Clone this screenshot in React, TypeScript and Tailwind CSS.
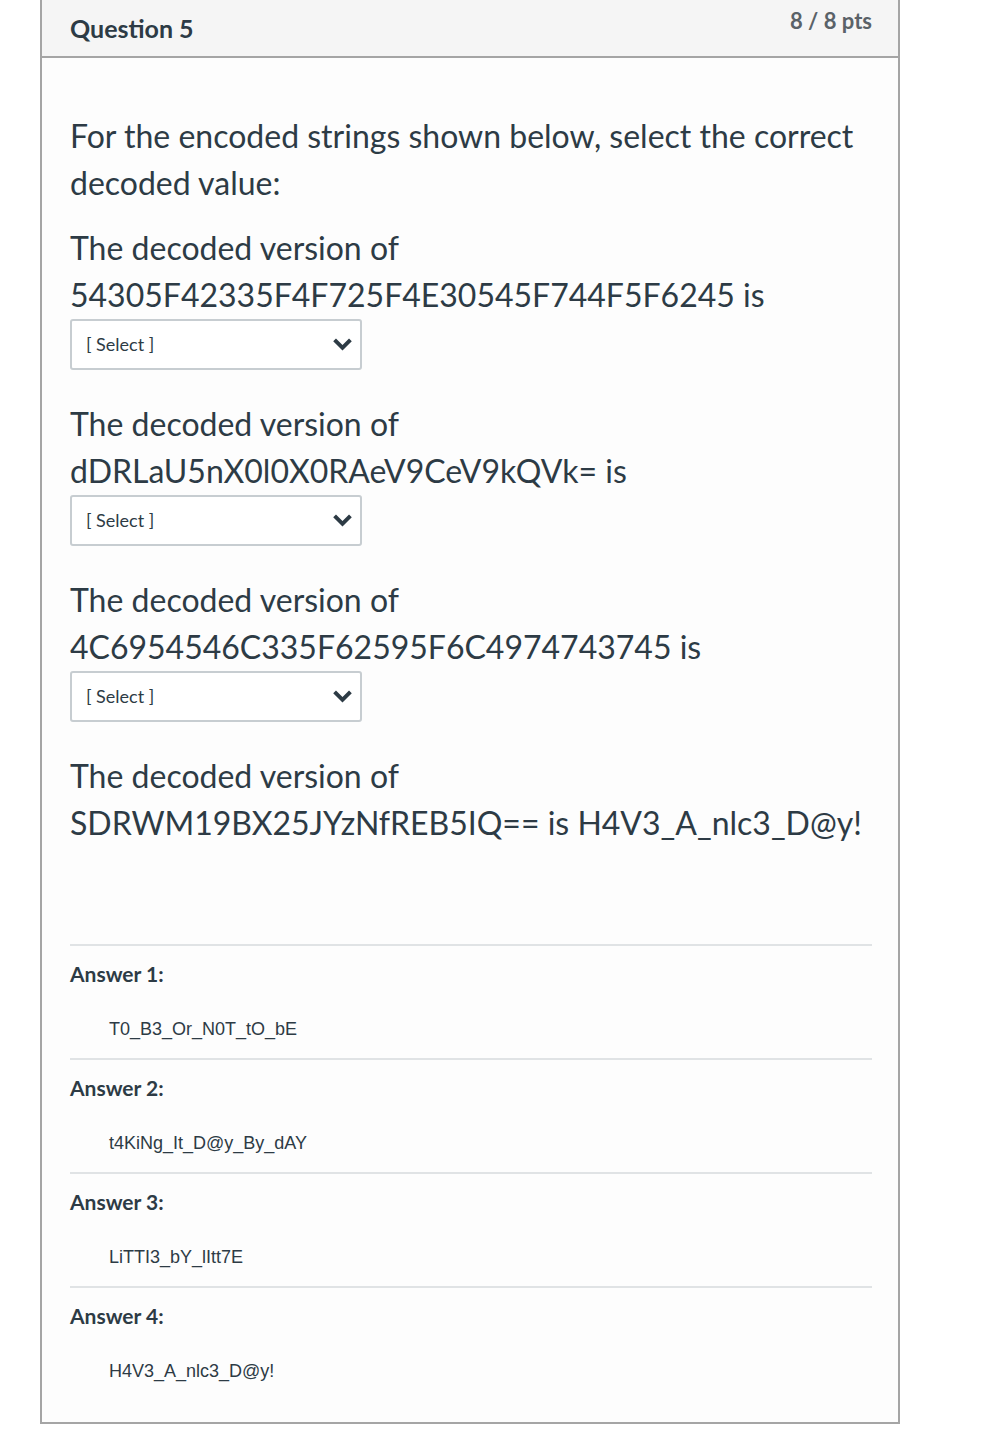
import React from "react";

const questions = [
  { code: "54305F42335F4F725F4E30545F744F5F6245", select: true },
  { code: "dDRLaU5nX0l0X0RAeV9CeV9kQVk=", select: true },
  { code: "4C6954546C335F62595F6C4974743745", select: true },
  { code: "SDRWM19BX25JYzNfREB5IQ==", answer: "H4V3_A_nlc3_D@y!" },
];

const answers = ["T0_B3_Or_N0T_tO_bE", "t4KiNg_It_D@y_By_dAY", "LiTTI3_bY_lItt7E", "H4V3_A_nlc3_D@y!"];

const SelectBox = () => (
  <div className="mt-[1px] flex h-[51px] w-[292px] items-center justify-between rounded-[3px] border-2 border-[#c7cdd1] bg-white pl-[14px] pr-[6px]">
    <span className="text-[18px] text-[#2d3b45]">[ Select ]</span>
    <svg width="23" height="23" viewBox="0 0 24 24">
      <path d="M2.3 8.6 5.2 5.7l6.8 6.8 6.8-6.8 2.9 2.9L12 18.3z" fill="#2d3b45" />
    </svg>
  </div>
);

const App = () => {
  return (
    <div className="min-h-[1430px] bg-white pl-[40px]" style={{ fontFamily: "Lato, 'Noto Sans', sans-serif" }}>
      <div className="w-[860px] border-x-2 border-b-2 border-[#a5a5a5] bg-[#fdfdfd]">
        <div className="flex h-[58px] items-start justify-between border-b-2 border-[#a5a5a5] bg-[#f5f5f5] pl-[28px] pr-[26px]">
          <h2 className="mt-[10px] text-[25px] font-bold text-[#2d3b45]">Question 5</h2>
          <span className="mt-[4px] text-[22px] font-bold text-[#5a6268]">8 / 8 pts</span>
        </div>

        <div className="pl-[28px] pr-[26px] pt-[54px] text-[32px] leading-[47px] text-[#2d3b45]">
          <p>For the encoded strings shown below, select the correct decoded value:</p>
          {questions.map((q, i) => (
            <div key={i} className={i === 0 ? "mt-[18px]" : "mt-[30px]"}>
              <p>The decoded version of</p>
              <p>
                {q.code} is{q.answer ? ` ${q.answer}` : ""}
              </p>
              {q.select && <SelectBox />}
            </div>
          ))}

          <div className="mt-[98px] border-t-2 border-[#e0e3e5]">
            {answers.map((a, i) => (
              <div key={i} className={i < answers.length - 1 ? "border-b-2 border-[#e0e3e5]" : ""}>
                <div className="pt-[14px] text-[21px] font-bold leading-[28px]">Answer {i + 1}:</div>
                <div
                  className="pl-[39px] pt-[29px] pb-[17px] text-[18px] leading-[24px] text-[#2d3b45]"
                  style={{ fontFamily: "'Liberation Sans', Arial, sans-serif" }}
                >
                  {a}
                </div>
              </div>
            ))}
            <div className="h-[22px]" />
          </div>
        </div>
      </div>
    </div>
  );
};

export default App;
